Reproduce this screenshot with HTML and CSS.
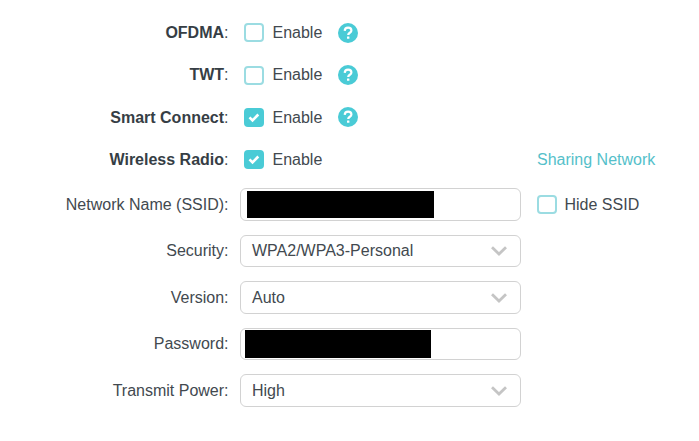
FILE: index.html
```html
<!DOCTYPE html>
<html lang="en">
<head>
<meta charset="utf-8">
<title>Wireless Settings</title>
<link rel="stylesheet" href="styles.css">
</head>
<body>
<svg width="0" height="0" class="defs">
  <symbol id="check" viewBox="0 0 19 19"><path d="M5 9.300l3 3L13.800 6.500" fill="none" stroke="#fff" stroke-width="2.600"/></symbol>
  <symbol id="help" viewBox="0 0 20 20"><circle cx="10" cy="10" r="10" fill="#4acbd6"/><path d="M6.700 7.900C6.800 5.700 8.200 4.600 10.100 4.600c1.900 0 3.300 1.100 3.300 2.800 0 2.300-3.200 2.400-3.200 4.700" fill="none" stroke="#fff" stroke-width="2.200"/><rect x="9" y="13.400" width="2.400" height="2.400" rx=".4" fill="#fff"/></symbol>
  <symbol id="chevron" viewBox="0 0 18 12"><path d="M2 2.200l7 6.800 7-6.800" fill="none" stroke="#c5c5c5" stroke-width="2.800"/></symbol>
</svg>
<form class="form">
  <div class="row toggle"><div class="label"><b>OFDMA</b>:</div><div class="option"><span class="box"></span><span class="text">Enable</span><svg class="help"><use href="#help"/></svg></div></div>
  <div class="row toggle"><div class="label"><b>TWT</b>:</div><div class="option"><span class="box"></span><span class="text">Enable</span><svg class="help"><use href="#help"/></svg></div></div>
  <div class="row toggle"><div class="label low"><b>Smart Connect</b>:</div><div class="option"><span class="box on"><svg><use href="#check"/></svg></span><span class="text low">Enable</span><svg class="help"><use href="#help"/></svg></div></div>
  <div class="row toggle"><div class="label"><b>Wireless Radio</b>:</div><div class="option"><span class="box on"><svg><use href="#check"/></svg></span><span class="text">Enable</span></div><a class="link">Sharing Network</a></div>
  <div class="row"><div class="label low">Network Name (SSID):</div><div class="field tall"><span class="mask ssid"></span></div><div class="side"><span class="box"></span><span class="text low">Hide SSID</span></div></div>
  <div class="row"><div class="label">Security:</div><div class="field">WPA2/WPA3-Personal<svg class="chevron"><use href="#chevron"/></svg></div></div>
  <div class="row"><div class="label low">Version:</div><div class="field tall"><span class="low">Auto</span><svg class="chevron"><use href="#chevron"/></svg></div></div>
  <div class="row"><div class="label">Password:</div><div class="field"><span class="mask password"></span></div></div>
  <div class="row"><div class="label low">Transmit Power:</div><div class="field tall"><span class="low">High</span><svg class="chevron"><use href="#chevron"/></svg></div></div>
</form>
</body>
</html>
```
FILE: styles.css
```css
* { box-sizing: border-box; }
body { margin: 0; background: #fff; color: #42494f; font: 16px/20px "Liberation Sans", Arial, sans-serif; }
.defs { display: none; }
.form { padding-top: 11.500px; }
.row { display: grid; grid-template-columns: 228.500px 281px 1fr; column-gap: 11.500px; height: 46.500px; align-items: center; }
.row.toggle { height: 42.400px; }
.label { text-align: right; white-space: nowrap; }
.label b { color: #363e45; }
.low { padding-top: 1px; }
.option { display: flex; align-items: center; padding-left: 4px; }
.side { display: flex; align-items: center; padding-left: 4px; }
.box { width: 20px; height: 19px; border: 2px solid #9bdce2; border-radius: 4px; flex: none; }
.box.on { border: 0; background: #4acbd6; }
.box svg { display: block; width: 20px; height: 19px; }
.text { margin-left: 8.500px; }
.side .text { margin-left: 8px; }
.help { width: 20px; height: 20px; margin-left: 15.500px; }
.link { color: #55bfca; padding-left: 4.500px; }
.field { display: flex; align-items: center; height: 32px; border: 1px solid #d2d2d2; border-radius: 6px; padding-left: 11px; }
.field.tall { height: 33px; }
.chevron { width: 18px; height: 12px; margin: 1px 12px 0 auto; }
.mask { background: #000; }
.ssid { width: 187px; height: 27px; margin-left: -5px; }
.password { width: 186px; height: 28px; margin-left: -7px; }
```
